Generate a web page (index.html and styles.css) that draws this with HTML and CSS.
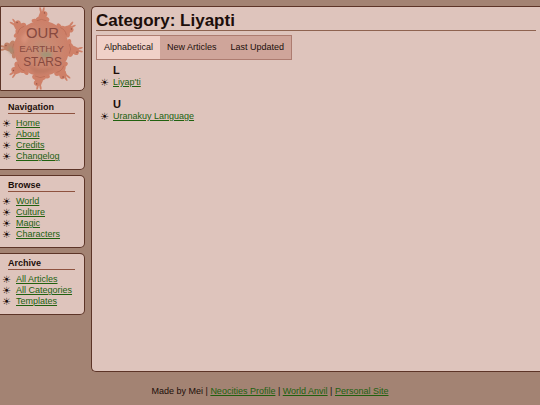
FILE: index.html
```html
<!DOCTYPE html>
<html lang="en">
<head>
<meta charset="utf-8">
<meta name="viewport" content="width=device-width, initial-scale=1">
<title>Category: Liyapti</title>
<link rel="stylesheet" href="styles.css">
</head>
<body>
<div class="layout">
  <aside class="sidebar">
    <a class="panel logo" href="#" aria-label="Our Earthly Stars">
      <svg viewBox="0 0 84 84">
        <defs>
          <radialGradient id="planet">
            <stop offset="0" stop-color="#bd9078"/>
            <stop offset=".35" stop-color="#ca8a73"/>
            <stop offset="1" stop-color="#cd8069"/>
          </radialGradient>
          <filter id="wash"><feGaussianBlur stdDeviation="1.6"/></filter>
          <g id="critter">
            <ellipse cx="1" cy="-29" rx="7" ry="4"/>
            <ellipse cx="-7" cy="-28" rx="3" ry="2"/>
            <ellipse cx="1" cy="-32" rx="4" ry="4"/>
            <ellipse cx="2" cy="-35" rx="4" ry="3"/>
            <ellipse cx="-1" cy="-39" rx="1" ry="3" transform="rotate(-12 -1 -39)"/>
            <ellipse cx="2" cy="-39" rx="1" ry="3" transform="rotate(12 2 -39)"/>
            <circle cx="3" cy="-36" r=".7" fill="#8c4c40"/>
            <path d="M-5 -28Q0 -31 5 -28" fill="none" stroke="#b56b57" stroke-width=".7"/>
          </g>
        </defs>
        <g transform="translate(41 42)" fill="#cf8068">
          <use href="#critter"/>
          <use href="#critter" transform="rotate(52)"/>
          <use href="#critter" transform="rotate(91)"/>
          <use href="#critter" transform="rotate(138)"/>
          <use href="#critter" transform="rotate(183)"/>
          <use href="#critter" transform="rotate(227)"/>
          <use href="#critter" transform="rotate(270)" fill="#c28268"/>
          <use href="#critter" transform="rotate(312)"/>
        </g>
        <circle cx="41" cy="42" r="28" fill="url(#planet)"/>
        <g filter="url(#wash)">
          <path d="M39 47Q48 43 52 47Q51 54 43 51Z" fill="#a39477"/>
          <path d="M8 39Q6 44 11 48L13 43Z" fill="#a38f74"/>
          <path d="M20 32Q28 20 36 21Q28 29 24 38Z" fill="#d9917a"/>
          <path d="M25 56Q39 68 58 59Q48 69 34 67Z" fill="#bf7862"/>
        </g>
        <g class="lettering">
          <text x="42" y="31" font-size="15">OUR</text>
          <text x="41" y="46" font-size="10">EARTHLY</text>
          <text x="42" y="60" font-size="12">STARS</text>
        </g>
      </svg>
    </a>
    <nav class="panel" aria-labelledby="nav-title">
      <h2 id="nav-title">Navigation</h2>
      <ul>
        <li><a href="#">Home</a></li>
        <li><a href="#">About</a></li>
        <li><a href="#">Credits</a></li>
        <li><a href="#">Changelog</a></li>
      </ul>
    </nav>
    <nav class="panel" aria-labelledby="browse-title">
      <h2 id="browse-title">Browse</h2>
      <ul>
        <li><a href="#">World</a></li>
        <li><a href="#">Culture</a></li>
        <li><a href="#">Magic</a></li>
        <li><a href="#">Characters</a></li>
      </ul>
    </nav>
    <nav class="panel" aria-labelledby="archive-title">
      <h2 id="archive-title">Archive</h2>
      <ul>
        <li><a href="#">All Articles</a></li>
        <li><a href="#">All Categories</a></li>
        <li><a href="#">Templates</a></li>
      </ul>
    </nav>
  </aside>
  <main class="content">
    <h1>Category: Liyapti</h1>
    <div class="tabs" role="tablist">
      <button type="button" role="tab" aria-selected="true">Alphabetical</button>
      <button type="button" role="tab" aria-selected="false">New Articles</button>
      <button type="button" role="tab" aria-selected="false">Last Updated</button>
    </div>
    <section class="letter">
      <h3>L</h3>
      <ul><li><a href="#">Liyap'ti</a></li></ul>
    </section>
    <section class="letter">
      <h3>U</h3>
      <ul><li><a href="#">Uranakuy Language</a></li></ul>
    </section>
  </main>
</div>
<footer>Made by Mei | <a href="#">Neocities Profile</a> | <a href="#">World Anvil</a> | <a href="#">Personal Site</a></footer>
</body>
</html>
```
FILE: styles.css
```css
* { box-sizing: border-box; }

body {
  margin: 0;
  min-height: 100vh;
  display: flex;
  flex-direction: column;
  background: #a38373;
  color: #1c0e0a;
  font: 9px/11px "Liberation Sans", Arial, sans-serif;
}

h1, h2, h3, ul { margin: 0; padding: 0; }

a { color: #21610f; }

.layout {
  flex: 1;
  display: flex;
  align-items: stretch;
  gap: 6px;
  padding-top: 6px;
}

.sidebar {
  flex: 0 0 85px;
  display: flex;
  flex-direction: column;
  gap: 5px;
}

.panel {
  border: 1px solid #5c3427;
  border-left: 0;
  border-radius: 0 5px 5px 0;
  background: #dec4bc;
  padding: 4px 9px 7px 8px;
}

.logo {
  padding: 0;
  margin-bottom: 1px;
  border-left: 1px solid #5c3427;
}

.logo svg {
  display: block;
  width: 100%;
}

.lettering {
  fill: #87493f;
  font-family: "Liberation Sans", sans-serif;
  text-anchor: middle;
}

h2 {
  font-size: 9px;
  line-height: 11px;
  border-bottom: 1px solid #8e523f;
  margin-bottom: 4px;
}

ul { list-style: none; }

li {
  display: flex;
  align-items: center;
  white-space: nowrap;
}

li::before {
  content: "☀";
  flex: 0 0 13px;
  font: 10px/11px "DejaVu Sans", sans-serif;
}

.panel ul { margin-left: -6px; }

.panel li::before { flex-basis: 14px; }

.content {
  flex: 1;
  min-width: 0;
  border: 1px solid #5c3427;
  border-right: 0;
  border-radius: 5px 0 0 5px;
  background: #dec4bc;
  padding: 4px;
}

h1 {
  font-size: 17px;
  line-height: 19px;
  border-bottom: 1px solid #8e6350;
  margin-bottom: 4px;
}

.tabs {
  display: inline-flex;
  border: 1px solid #ad7c70;
  background: #cfa59a;
}

.tabs button {
  border: 0;
  background: none;
  color: inherit;
  font: inherit;
  padding: 6px 7px;
}

.tabs button[aria-selected="true"] { background: #f0d0c8; }

.letter {
  margin: 3px 0 9px 4px;
}

.letter h3 {
  font-size: 11px;
  line-height: 14px;
  margin-left: 13px;
}

footer {
  text-align: center;
  padding: 14px 0 8px;
}
```
